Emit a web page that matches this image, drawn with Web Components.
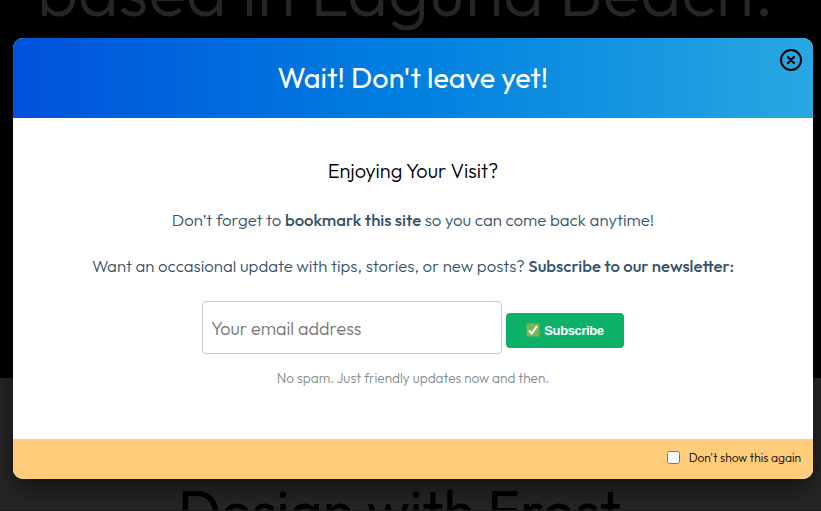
<!DOCTYPE html>
<html lang="en"><head><meta charset="utf-8"><title>Exit dialog</title>
<style>
html,body{margin:0;height:100%;overflow:hidden;background:#000}
body{font-family:Outfit,Lato,"Open Sans",sans-serif}
</style></head><body>
<page-backdrop></page-backdrop>
<exit-dialog></exit-dialog>
<script>
const define=(name,html)=>customElements.define(name,class extends HTMLElement{
  connectedCallback(){
    if(this.shadowRoot)return;
    const t=document.createElement('template');t.innerHTML=html;
    this.attachShadow({mode:'open'}).append(t.content.cloneNode(true));
  }
});
define('page-backdrop',`<style>
:host{display:flex;flex-direction:column;height:511px;overflow:hidden;position:relative}
section{display:flex;justify-content:center;box-sizing:border-box;overflow:hidden;white-space:nowrap}
h1,h2{margin:0;flex:none}
.hero{height:378px;flex:none;background:#000;color:#262626;align-items:flex-start;padding-right:10px}
h1{font-weight:350;font-size:70px;line-height:80px;margin-top:-50px}
.next{height:133px;background:#262626;color:#000;padding:94px 22px 0 0;border-bottom:1px solid #21191d}
h2{font-weight:400;font-size:57.8px;line-height:76px}
</style><section class="hero"><h1>based in Laguna Beach.</h1></section>
<section class="next"><h2>Design with Frost</h2></section>`);
define('dialog-close',`<style>:host{display:block;width:24px;height:24px}svg{display:block}</style>
<svg width="24" height="24" viewBox="0 0 24 24" fill="none" stroke="#000" stroke-width="2"><circle cx="12" cy="12" r="10"/><path d="M9 9l6 6m0-6l-6 6" stroke-width="2.3" stroke-linecap="round"/></svg>`);
define('subscribe-button',`<style>:host{display:block}
button{display:flex;align-items:center;justify-content:center;gap:4px;width:118px;height:35px;border:0;border-radius:4px;padding:0;background:#0db168;color:#fff;font:700 13px/15px "Liberation Sans",Arial,sans-serif}
svg{display:block;margin-top:-2px}span{letter-spacing:-.38px}
</style><button><svg width="14" height="14" viewBox="0 0 14 14"><rect x=".5" y=".5" width="13" height="13" rx="1" fill="#7cb45c"/><path d="M3 7.5l2.8 3L11 3" fill="none" stroke="#fff" stroke-width="2"/></svg><span><slot></slot></span></button>`);
define('subscribe-form',`<style>:host{display:flex;gap:4px;align-items:flex-start;justify-content:center}
.field{box-sizing:border-box;width:300px;height:53px;border:1px solid #ccc;border-radius:4px;padding:1px 8px 0;display:flex;align-items:center;color:#757575;font-weight:300;font-size:18px;background:#fff}
subscribe-button{margin-top:12px}
</style><div class="field" role="textbox">Your email address</div><subscribe-button>Subscribe</subscribe-button>`);
define('dialog-footer',`<style>:host{display:flex;height:40px;box-sizing:border-box;background:#ffcc7c;justify-content:flex-end;align-items:center;padding:0 12px 3px 0;color:#000;font-size:12px;font-weight:300}
label{display:flex;align-items:center;gap:9px}
input{margin:0;width:13px;height:13px}
</style><label><input type="checkbox">Don't show this again</label>`);
define('exit-dialog',`<style>
:host{position:absolute;left:13px;top:38px;width:800px;height:441px;border-radius:10px;overflow:hidden;background:#fff;display:flex;flex-direction:column;box-shadow:0 10px 25px rgba(0,0,0,.5)}
header{height:80px;box-sizing:border-box;padding-bottom:2px;display:flex;align-items:center;justify-content:center;position:relative;background:linear-gradient(90deg,#0052db,#0080e0 50%,#29a7e2);color:#fff;font-size:28.8px}
dialog-close{position:absolute;right:10px;top:10px}
main{height:321px;box-sizing:border-box;padding-top:40px;display:flex;flex-direction:column;align-items:center;color:#34526a}
h3{margin:0;font-size:20px;line-height:26px;font-weight:300;color:#000}
p{margin:0;font-size:16.8px;line-height:28px;font-weight:300;white-space:nowrap}
h3+p{margin-top:22px}p+p{margin-top:18px}
b{font-weight:500}
subscribe-form{margin-top:21px}
small{font-size:13.6px;line-height:20px;margin-top:14px;color:#7f8c8d;font-weight:300}
</style><header>Wait! Don't leave yet!<dialog-close role="button" aria-label="Close"></dialog-close></header>
<main><h3>Enjoying Your Visit?</h3>
<p>Don’t forget to <b>bookmark this site</b> so you can come back anytime!</p>
<p>Want an occasional update with tips, stories, or new posts? <b>Subscribe to our newsletter:</b></p>
<subscribe-form></subscribe-form><small>No spam. Just friendly updates now and then.</small></main>
<dialog-footer></dialog-footer>`);
</script></body></html>
